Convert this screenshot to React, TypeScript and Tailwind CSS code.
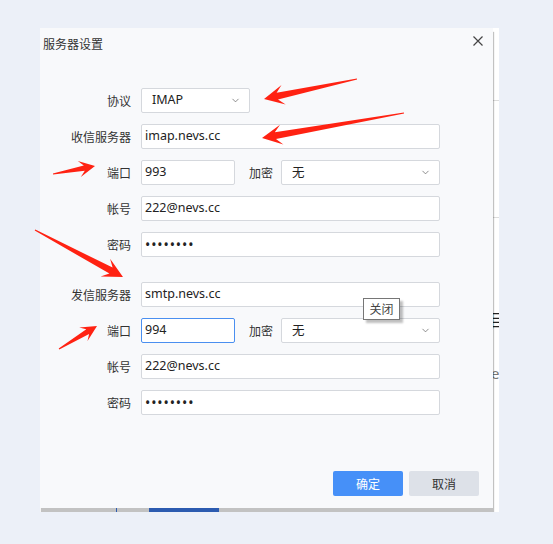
import { ChevronDown } from "lucide-react";

const cjk = { fontFamily: '"Noto Sans CJK SC", "Noto Sans", sans-serif' };
const latin = { fontFamily: '"Noto Sans", "Noto Sans CJK SC", sans-serif' };

const arrows: [number, number, number, number, number?][] = [
  [357, 79, 264, 99],
  [404, 113, 262, 138],
  [53, 174, 95, 166, 16],
  [35, 230, 123, 277],
  [59, 349, 97, 326, 16],
];

const arrowPoints = (tx: number, ty: number, px: number, py: number, L = 20) => {
  const dx = px - tx;
  const dy = py - ty;
  const len = Math.hypot(dx, dy);
  const ux = dx / len;
  const uy = dy / len;
  const nx = -uy;
  const ny = ux;
  const W = L * 0.5;
  const N = L * 0.68;
  const pt = (d: number, o: number) =>
    `${(px - ux * d + nx * o).toFixed(1)},${(py - uy * d + ny * o).toFixed(1)}`;
  return [
    pt(len, 0.6),
    pt(N, L * 0.17),
    pt(L, W),
    pt(0, 0),
    pt(L, -W),
    pt(N, -L * 0.17),
    pt(len, -0.6),
  ].join(" ");
};

const Label = ({ children }: { children: string }) => (
  <span className="w-[91px] shrink-0 text-right text-[12px] text-[#333]" style={cjk}>
    {children}
  </span>
);

const Field = ({
  value,
  focused = false,
  className = "w-[299px]",
}: {
  value: string;
  focused?: boolean;
  className?: string;
}) => (
  <div
    className={`h-[25px] flex items-center pl-[3px] bg-white rounded-[2px] border ${
      focused ? "border-[#4a8ff0]" : "border-[#d5d8dd]"
    } ${className}`}
  >
    <span className="text-[12.5px] text-[#222]" style={latin}>
      {value}
    </span>
  </div>
);

const Password = () => (
  <div className="w-[299px] h-[25px] flex items-center pl-[3px] bg-white rounded-[2px] border border-[#d5d8dd]">
    <span className="text-[14px] leading-none tracking-[0.9px] text-[#222]" style={latin}>
      ••••••••
    </span>
  </div>
);

const Select = ({ value, className, mono }: { value: string; className: string; mono?: boolean }) => (
  <div
    className={`h-[25px] flex items-center justify-between pl-[10px] pr-[8px] bg-white rounded-[2px] border border-[#d5d8dd] ${className}`}
  >
    <span className="text-[12.5px] text-[#222]" style={mono ? latin : cjk}>
      {value}
    </span>
    <ChevronDown size={11} strokeWidth={1.6} className="text-[#666]" />
  </div>
);

const Row = ({ label, children, className = "" }: { label: string; children: React.ReactNode; className?: string }) => (
  <div className={`flex items-center gap-[10px] ${className}`}>
    <Label>{label}</Label>
    {children}
  </div>
);

const PortRow = ({ port, focused }: { port: string; focused?: boolean }) => (
  <Row label="端口">
    <Field value={port} focused={focused} className="w-[94px]" />
    <span className="ml-[4px] w-[22px] whitespace-nowrap text-[12px] text-[#333]" style={cjk}>
      加密
    </span>
    <Select value="无" className="w-[159px]" />
  </Row>
);

export default function App() {
  return (
    <div className="relative w-[553px] h-[544px] bg-[#ecf0f8] overflow-hidden">
      <div className="pt-[28px] pl-[40px]">
        {/* window behind the dialog */}
        <div className="relative w-[459px] h-[484px] bg-white overflow-hidden">
          <div className="absolute left-0 right-0 top-[72px] h-px bg-[#dcdcdc]" />
          <div className="absolute left-0 right-0 top-[189px] h-px bg-[#dcdcdc]" />
          <span className="absolute left-[449px] top-[279px] text-[17px] text-[#222]" style={cjk}>
            目
          </span>
          <span className="absolute left-[451px] top-[334px] text-[15px] text-[#777]" style={latin}>
            e
          </span>
          <div className="absolute left-[109px] bottom-0 w-[70px] h-[10px] bg-[#3b78e8]" />
          <div className="absolute left-[76px] bottom-0 w-px h-[10px] bg-[#3b78e8]" />

          {/* dialog */}
          <div className="absolute left-0 top-0 w-[453px] h-[480px] bg-[#f8f9fb] flex flex-col shadow-[1px_4px_1px_rgba(0,0,0,0.24)]">
            <div className="h-[32px] flex items-center justify-between pl-[3px] pr-[10px]">
              <span className="text-[12px] text-[#333]" style={cjk}>
                服务器设置
              </span>
              <svg width="10" height="10" viewBox="0 0 10 10" className="mb-[6px]">
                <path d="M0.5 0.5 L9.5 9.5 M9.5 0.5 L0.5 9.5" stroke="#444" strokeWidth="1.2" />
              </svg>
            </div>

            <div className="mt-[28px] flex flex-col gap-[11px]">
              <Row label="协议">
                <Select value="IMAP" className="w-[109px]" mono />
              </Row>
              <Row label="收信服务器">
                <Field value="imap.nevs.cc" />
              </Row>
              <PortRow port="993" />
              <Row label="帐号">
                <Field value="222@nevs.cc" />
              </Row>
              <Row label="密码">
                <Password />
              </Row>
              <Row label="发信服务器" className="mt-[14px]">
                <Field value="smtp.nevs.cc" />
              </Row>
              <PortRow port="994" focused />
              <Row label="帐号">
                <Field value="222@nevs.cc" />
              </Row>
              <Row label="密码">
                <Password />
              </Row>
            </div>

            <div className="mt-auto mb-[12px] mr-[14px] flex justify-end gap-[6px]">
              <button
                className="w-[70px] h-[25px] rounded-[2px] bg-[#4690f8] text-white text-[12px]"
                style={cjk}
              >
                确定
              </button>
              <button
                className="w-[70px] h-[25px] rounded-[2px] bg-[#dde1e8] text-[#333] text-[12px]"
                style={cjk}
              >
                取消
              </button>
            </div>
          </div>

          {/* tooltip */}
          <div
            className="absolute left-[323px] top-[270px] w-[37px] h-[22px] flex items-center justify-center bg-white border border-[#767676] shadow-[3px_3px_2px_rgba(0,0,0,0.25)] text-[12px] text-[#444]"
            style={cjk}
          >
            关闭
          </div>
        </div>
      </div>

      {/* annotation arrows */}
      <svg className="absolute inset-0 pointer-events-none" width="553" height="544">
        {arrows.map(([tx, ty, px, py, L], i) => (
          <polygon key={i} points={arrowPoints(tx, ty, px, py, L)} fill="#ff2212" />
        ))}
      </svg>
    </div>
  );
}
